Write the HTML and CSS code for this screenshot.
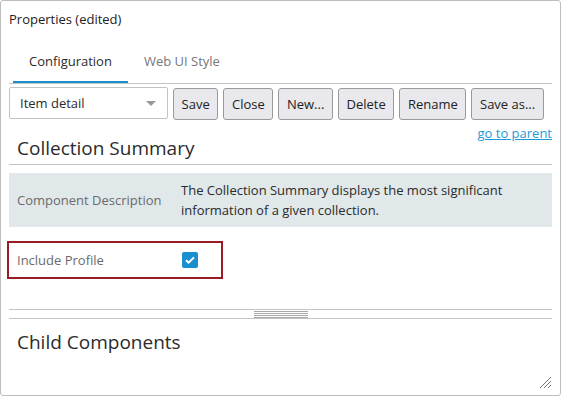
FILE: index.html
```html
<!DOCTYPE html>
<html lang="en">
<head>
  <meta charset="UTF-8">
  <title>Properties</title>
  <link rel="stylesheet" href="styles.css">
</head>
<body>
  <div class="panel">
    <div class="panel-title">Properties (edited)</div>

    <!-- Tabs -->
    <div class="tabs">
      <a href="#" class="tab active">Configuration</a>
      <a href="#" class="tab">Web UI Style</a>
    </div>

    <!-- Toolbar -->
    <div class="toolbar">
      <div class="select">
        <span>Item detail</span>
        <span class="caret"></span>
      </div>
      <button class="btn">Save</button>
      <button class="btn">Close</button>
      <button class="btn">New...</button>
      <button class="btn">Delete</button>
      <button class="btn">Rename</button>
      <button class="btn">Save as...</button>
    </div>

    <div class="section-head">
      <a href="#" class="parent-link">go to parent</a>
      <h2 class="section-title">Collection Summary</h2>
    </div>

    <div class="prop-row desc-row">
      <div class="prop-label">Component Description</div>
      <div class="prop-value">The Collection Summary displays the most significant information of a given collection.</div>
    </div>

    <div class="prop-row highlight">
      <div class="prop-label">Include Profile</div>
      <span class="checkbox">
        <svg width="16" height="16" viewBox="0 0 16 16"><path d="M4 8.2l2.6 2.5L12 5.4" fill="none" stroke="#fff" stroke-width="2"/></svg>
      </span>
    </div>

    <!-- Splitter -->
    <div class="splitter"><span class="grip"></span></div>

    <h2 class="section-title child-title">Child Components</h2>

    <svg class="resize-grip" width="14" height="14" viewBox="0 0 14 14">
      <path d="M13 2L2 13M13 6L6 13M13 10L10 13" stroke="#777" stroke-width="1"/>
    </svg>
  </div>
</body>
</html>
```

FILE: styles.css
```css
:root {
  --text: #2b2b2b;
  --muted: #6b6b6b;
  --line: #c4c4c4;
  --blue: #1a8fd0;
  --link: #1e9ad6;
  --red: #9b1b24;
}
* {
  margin: 0;
  padding: 0;
  box-sizing: border-box;
}
body {
  font-family: "Open Sans", sans-serif;
  font-size: 13px;
  color: var(--text);
  background: #fff;
}
.panel {
  position: relative;
  width: 561px;
  height: 396px;
  border: 1px solid #bdbdbd;
  border-radius: 3px;
  padding: 9px 8px 0 8px;
  overflow: hidden;
}
.panel-title {
  line-height: 18px;
  color: #222;
}
/* Tabs */
.tabs {
  display: flex;
  margin-top: 12px;
  padding-left: 4px;
  border-bottom: 1px solid var(--line);
}
.tab {
  padding: 11px 16px 10px;
  line-height: 20px;
  text-decoration: none;
  color: #777;
  border-bottom: 2px solid transparent;
}
.tab.active {
  color: var(--text);
  border-bottom-color: var(--blue);
}
/* Toolbar */
.toolbar {
  display: flex;
  align-items: flex-start;
  gap: 5px;
  margin-top: 3px;
}
.select {
  width: 159px;
  height: 32px;
  display: flex;
  align-items: center;
  justify-content: space-between;
  padding: 0 11px 0 10px;
  border: 1px solid #c2c2c2;
  border-radius: 2px;
}
.caret {
  width: 0;
  height: 0;
  border-left: 5px solid transparent;
  border-right: 5px solid transparent;
  border-top: 5px solid #999;
}
.btn {
  height: 32px;
  margin-top: 1px;
  padding: 0 7.6px;
  font: inherit;
  color: #222;
  background: #e9e9ed;
  border: 1px solid #9a9a9a;
  border-radius: 3px;
}
/* Section heading */
.section-head {
  display: grid;
  height: 45px;
  border-bottom: 1px solid var(--line);
}
.section-head > * {
  grid-area: 1 / 1;
}
.parent-link {
  justify-self: end;
  align-self: start;
  margin-top: 5px;
  line-height: 16px;
  color: var(--link);
}
.section-title {
  align-self: end;
  padding: 0 0 4px 8px;
  font-size: 19px;
  font-weight: 400;
  line-height: 24px;
  color: var(--text);
}
/* Property rows */
.prop-row {
  display: flex;
  align-items: center;
}
.prop-label {
  flex: 0 0 172px;
  padding-left: 8px;
  color: var(--muted);
}
.desc-row {
  margin-top: 8px;
  padding: 7px 0;
  background: #e0e8ea;
}
.prop-value {
  padding-right: 20px;
  line-height: 20px;
}
.highlight {
  width: 212px;
  margin-top: 16px;
  padding: 7px 0;
  line-height: 20px;
  outline: 2px solid var(--red);
}
.checkbox {
  display: inline-flex;
  width: 16px;
  height: 16px;
  margin-left: 1px;
  background: var(--blue);
  border-radius: 2px;
}
/* Splitter */
.splitter {
  display: flex;
  justify-content: center;
  margin-top: 32px;
  height: 10px;
  padding-top: 1px;
  border-top: 1px solid var(--line);
  border-bottom: 1px solid var(--line);
}
.grip {
  width: 54px;
  height: 7px;
  background: repeating-linear-gradient(#a8a8a8 0 1px, transparent 1px 2px);
}
.child-title {
  margin-top: 11px;
  padding-bottom: 0;
}
.resize-grip {
  position: absolute;
  right: 8px;
  bottom: 6px;
}
```
